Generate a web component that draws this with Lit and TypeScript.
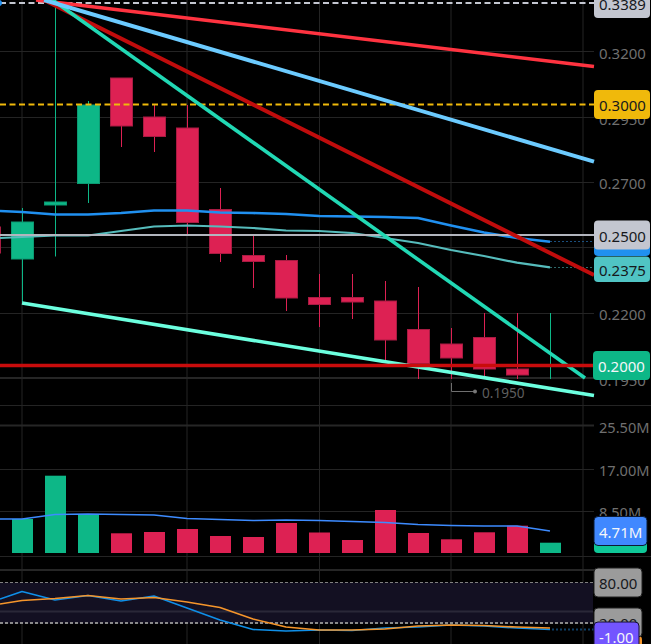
import { LitElement, html, svg, css } from "lit";
import { customElement } from "lit/decorators.js";

type Candle = [number, number, number, number, number, "up" | "down"];

// x, body top, body bottom, wick top, wick bottom
const candles: Candle[] = [
  [-11, 227, 253, 221, 254, "down"],
  [22, 222, 259, 208, 302, "up"],
  [55, 202, 205, 0, 256.5, "up"],
  [88, 105, 183.5, 101, 203, "up"],
  [121, 78, 126, 78, 147, "down"],
  [154, 117, 136.5, 105, 152, "down"],
  [187, 128, 222.5, 105, 235, "down"],
  [220, 209.5, 253.5, 188, 262, "down"],
  [253, 255.5, 261.5, 236, 288, "down"],
  [286, 260.5, 298, 255, 311, "down"],
  [319, 297.5, 304.5, 274, 327, "down"],
  [352, 297.5, 302, 274, 319, "down"],
  [385, 301, 340, 281, 361, "down"],
  [418, 329.5, 363.5, 287, 379, "down"],
  [451, 344, 358, 328, 379, "down"],
  [484, 337.5, 369, 313, 376, "down"],
  [517, 369, 375, 313, 379, "down"],
];

const volume: [number, number, "up" | "down"][] = [
  [22, 519, "up"], [55, 475.7, "up"], [88, 515, "up"], [121, 533.3, "down"],
  [154, 532, "down"], [187, 529, "down"], [220, 536, "down"], [253, 537, "down"],
  [286, 523, "down"], [319, 532.5, "down"], [352, 540, "down"], [385, 510, "down"],
  [418, 533, "down"], [451, 539.3, "down"], [484, 532.3, "down"], [517, 525.7, "down"],
  [550, 542.7, "up"],
];

const maBlue = "0,211 22,212 55,214.5 88,214.5 121,213 154,210.5 187,210.5 220,212.5 253,213 286,214 319,216 352,216.5 385,217 418,218 451,225.5 484,232.5 517,238 550,241.7";
const maTeal = "0,238 22,237 55,235.5 88,235.5 121,231 154,226.5 187,225.5 220,226.5 253,228 286,230.5 319,231 352,233 385,238 418,243 451,250 484,256 517,262.7 550,267.3";
const volMa = "0,519 22,519 55,514.5 88,514 121,514.5 154,515 187,518.5 220,519.5 253,520.5 286,520 319,520.5 352,521.5 385,522.5 418,524.5 451,525.5 484,526 517,526 550,531";
const rsiK = "0,599 22,591.5 55,600 88,595.5 121,601 154,596 187,608 220,620 253,629.5 286,631 319,630 352,630.5 385,628 418,627 451,625 484,626 517,628 550,629.5";
const rsiD = "0,604 22,600.5 55,598.5 88,595.5 121,599 154,597.5 187,602 220,607.5 253,619 286,627 319,630 352,630 385,629 418,626 451,625 484,625.5 517,627 550,628";

const hGrid = [51, 117, 182, 247, 313, 469, 511];
const vGrid = [22, 187, 319.5, 451, 583];

const axis: [string, number, string][] = [
  ["0.3200", 53, "axis"], ["0.2950", 118.5, "axis"], ["0.2700", 183, "axis"], ["0.2200", 314, "axis"], ["0.1950", 379.5, "axis"],
  ["25.50M", 427, "axis vol"], ["17.00M", 470, "axis vol"], ["8.50M", 512, "axis vol"], ["90.00", 571.5, "axis"],
];

const badges: [string, number, number, number, number, string, string][] = [
  // text, x, top, width, height, box class, text class
  ["0.3389", 594, -11, 56, 29, "b-grey", "t-dark"],
  ["0.3000", 594, 90, 56, 29, "b-yellow", "t-dark"],
  ["", 594, 240, 56, 16, "b-blue", "t-dark"],
  ["0.2375", 594, 256.5, 56, 25.5, "b-teal", "t-dark"],
  ["0.2500", 594, 220.5, 56, 29, "b-grey", "t-dark"],
  ["0.2000", 593, 351, 57, 29, "b-green", "t-light"],
  ["", 594, 530, 53, 23, "b-vol", "t-light"],
  ["4.71M", 594, 516.5, 53, 29, "b-volma", "t-light"],
  ["80.00", 594, 568, 48, 29, "b-osc", "t-dark"],
  ["", 636, 636, 6, 12, "b-orange", "t-dark"],
  ["20.00", 594, 608, 48, 29, "b-osc", "t-dark"],
  ["-1.00", 594, 622, 45, 29, "b-purple", "t-light"],
];

@customElement("app-root")
export class AppRoot extends LitElement {
  static styles = css`
    :host { display: block; width: 651px; height: 644px; background: #000; overflow: hidden; }
    svg { display: block; }
    .grid { stroke: #242424; stroke-width: 1; }
    .sep { stroke: #262626; stroke-width: 2; }
    .up { fill: #0db787; stroke: #0b9a72; stroke-width: 1; }
    .down { fill: #dd2153; stroke: #a81b42; stroke-width: 1; }
    .wick-up { stroke: #0db787; stroke-width: 1; }
    .wick-down { stroke: #dd2153; stroke-width: 1; }
    .vol-up { fill: #0db787; }
    .vol-down { fill: #dd2153; }
    .trend { fill: none; stroke-linecap: butt; }
    .red { stroke: #ff3340; stroke-width: 3.6; }
    .sky { stroke: #6ccbff; stroke-width: 4; }
    .dark-red { stroke: #c00c0c; stroke-width: 4; }
    .aqua { stroke: #21d8b4; stroke-width: 3.6; }
    .mint { stroke: #6cffdf; stroke-width: 3.6; }
    .level-red { stroke: #c80c0c; stroke-width: 3.4; }
    .level-yellow { stroke: #f0b90b; stroke-width: 2; stroke-dasharray: 6 3.5; }
    .level-grey { stroke: #c3c6d0; stroke-width: 2; stroke-dasharray: 6 3.5; }
    .level-white { stroke: #b2b5be; stroke-width: 2; }
    .ma { fill: none; stroke-linejoin: round; }
    .ma-blue { stroke: #2090f0; stroke-width: 2.6; }
    .ma-teal { stroke: #56bcbc; stroke-width: 2.2; }
    .ma-vol { stroke: #3d8bff; stroke-width: 1.4; }
    .rsi-k { stroke: #0f8fe8; stroke-width: 1.6; }
    .rsi-d { stroke: #f5952b; stroke-width: 1.6; }
    .dot-blue { stroke: #1a4e7c; stroke-width: 1; stroke-dasharray: 2 2; }
    .dot-teal { stroke: #2f6a6a; stroke-width: 1; stroke-dasharray: 2 2; }
    .dot-vol { stroke: #0f3f66; stroke-width: 2; stroke-dasharray: 2 2; }
    .band { fill: #131022; }
    .rsi-mid { stroke: #2a2838; stroke-width: 2; }
    .rsi-top { stroke: #808080; stroke-width: 1; stroke-dasharray: 3 2; }
    .rsi-bot { stroke: #8a8a8a; stroke-width: 2; stroke-dasharray: 3 2; }
    text { font-family: "Noto Sans", "Open Sans", sans-serif; font-size: 15px; dominant-baseline: central; }
    .axis { fill: #6f6f6f; }
    .vol { font-size: 14.6px; }
    .low { fill: #5f5f5f; font-size: 13.6px; }
    .t-dark { fill: #16181c; }
    .t-light { fill: #f4f6fa; }
    .b-grey { fill: #c3c6d0; }
    .b-yellow { fill: #f0b90b; }
    .b-blue { fill: #2090f0; }
    .b-teal { fill: #50c4c4; }
    .b-green { fill: #0db787; }
    .b-vol { fill: #0fc898; }
    .b-volma { fill: #4088ff; stroke: #0b1a33; stroke-width: 1; }
    .b-osc { fill: #9b9b9b; stroke: #222; stroke-width: 1; }
    .b-orange { fill: #f5952b; }
    .b-purple { fill: #7355ff; stroke: #15102e; stroke-width: 1; }
    .marker { fill: none; stroke: #6f6f6f; stroke-width: 1; }
    .marker-dot { fill: #777; }
    .blob { fill: #2090f0; }
  `;

  render() {
    return html`<svg width="651" height="644" viewBox="0 0 651 644" role="img" aria-label="Candlestick chart">
      ${vGrid.map((x) => svg`<line class="grid" x1=${x} x2=${x} y1="0" y2="644"></line>`)}
      ${hGrid.map((y) => svg`<line class="grid" x1="0" x2="594" y1=${y + 0.5} y2=${y + 0.5}></line>`)}
      <line class="sep" x1="0" x2="594" y1="378" y2="378"></line>
      <line class="grid" x1="0" x2="651" y1="405.5" y2="405.5"></line>
      <line class="sep" x1="0" x2="594" y1="425.5" y2="425.5"></line>
      <line class="grid" x1="0" x2="651" y1="556.5" y2="556.5"></line>
      <line class="sep" x1="0" x2="594" y1="570" y2="570"></line>

      <rect class="band" x="0" y="582.5" width="593" height="41"></rect>
      <line class="rsi-mid" x1="0" x2="593" y1="611.5" y2="611.5"></line>
      <line class="rsi-top" x1="0" x2="594" y1="582.5" y2="582.5"></line>
      <line class="rsi-bot" x1="0" x2="594" y1="623" y2="623"></line>

      ${axis.map(([t, y, c]) => svg`<text class=${c} x="599" y=${y}>${t}</text>`)}

      <line class="level-grey" x1="0" x2="594" y1="3" y2="3"></line>
      <circle class="blob" cx="-1" cy="3" r="3"></circle>

      <line class="wick-up" x1="550.5" x2="550.5" y1="313" y2="379"></line>
      ${candles.map(([x, top, bot, wt, wb, dir]) => svg`
        <line class="wick-${dir}" x1=${x + 0.5} x2=${x + 0.5} y1=${wt} y2=${wb}></line>
        <rect class=${dir} x=${x - 10.5} y=${top} width="22" height=${bot - top}></rect>`)}

      <polyline class="ma ma-blue" points=${maBlue}></polyline>
      <polyline class="ma ma-teal" points=${maTeal}></polyline>
      <line class="dot-blue" x1="550" x2="594" y1="241.5" y2="241.5"></line>
      <line class="dot-teal" x1="550" x2="594" y1="267.5" y2="267.5"></line>

      <line class="trend level-white" x1="0" x2="594" y1="235" y2="235"></line>
      <line class="trend level-yellow" x1="0" x2="594" y1="104.5" y2="104.5"></line>
      <line class="trend red" x1="36" y1="0" x2="594" y2="66.5"></line>
      <line class="trend dark-red" x1="44" y1="0" x2="594" y2="275"></line>
      <line class="trend aqua" x1="52.5" y1="0" x2="585" y2="378"></line>
      <line class="trend sky" x1="44" y1="0" x2="594" y2="161.7"></line>
      <line class="trend mint" x1="22" y1="303" x2="594" y2="395.5"></line>
      <line class="trend level-red" x1="0" x2="594" y1="365.5" y2="365.5"></line>

      <path class="marker" d="M451.5 383V391.5H474"></path>
      <circle class="marker-dot" cx="475" cy="391.5" r="2"></circle>
      <text class="low" x="482" y="392">0.1950</text>

      ${volume.map(([x, top, dir]) => svg`<rect class="vol-${dir}" x=${x - 10} y=${top} width="21" height=${553 - top}></rect>`)}
      <polyline class="ma ma-vol" points=${volMa}></polyline>

      <polyline class="ma rsi-k" points=${rsiK}></polyline>
      <polyline class="ma rsi-d" points=${rsiD}></polyline>
      <line class="dot-vol" x1="552" x2="594" y1="629.5" y2="629.5"></line>

      ${badges.map(([t, x, y, w, h, box, txt]) => svg`
        <rect class=${box} x=${x} y=${y} width=${w} height=${h} rx="4"></rect>
        ${t ? svg`<text class=${txt} x=${x + 5} y=${y + h / 2 + 0.5}>${t}</text>` : ""}`)}
    </svg>`;
  }
}
